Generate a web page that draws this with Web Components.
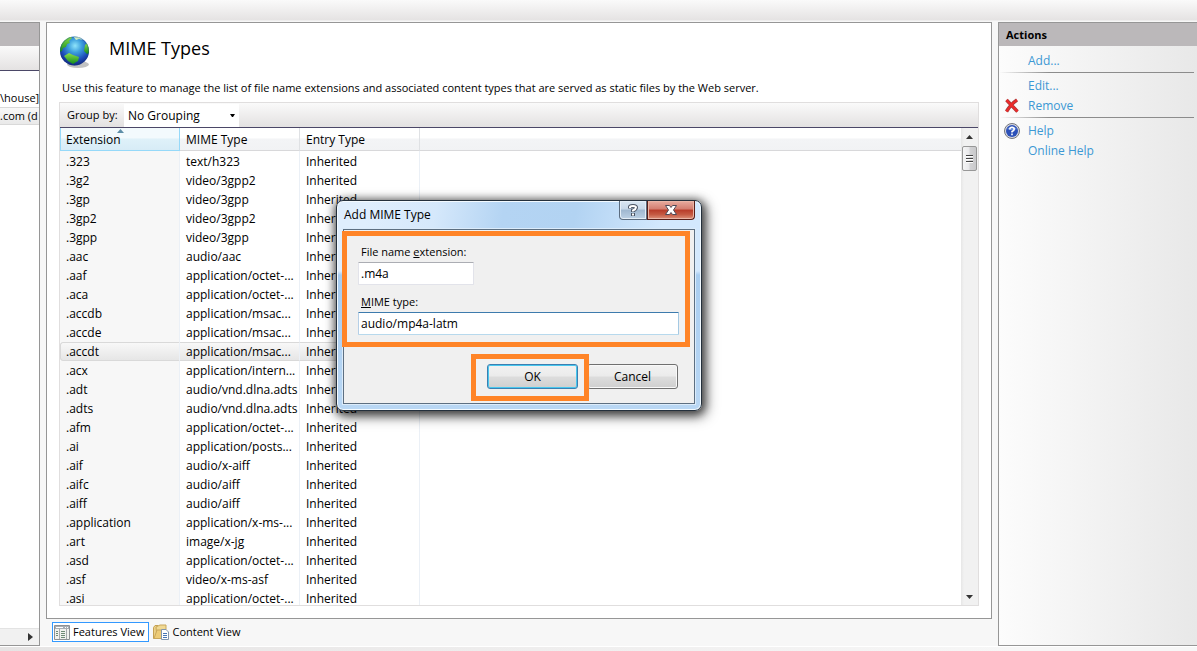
<!DOCTYPE html>
<html lang="en">
<head>
<meta charset="utf-8">
<title>MIME Types</title>
<style>
  html, body { height: 100%; margin: 0; }
  body { font: 12px/16px "Open Sans", "Noto Sans", sans-serif; color: #000; background: #f7f7f7; overflow: hidden; }
</style>
</head>
<body>
<manager-shell>
  <tree-pane slot="tree"></tree-pane>
  <feature-pane slot="feature"></feature-pane>
  <view-tabs slot="views"></view-tabs>
  <actions-pane slot="actions"></actions-pane>
</manager-shell>

<script>
const define = (name, html, setup) => {
  const template = document.createElement('template');
  template.innerHTML = '<style>*{box-sizing:border-box}</style>' + html;
  customElements.define(name, class extends HTMLElement {
    connectedCallback() {
      if (this.shadowRoot) return;
      const root = this.attachShadow({ mode: 'open' });
      root.append(template.content.cloneNode(true));
      if (setup) setup(root, this);
    }
  });
};

define('manager-shell', `
<style>
  :host { display: flex; flex-direction: column; height: 100vh; }
  .top { flex: none; height: 22px; background: linear-gradient(#fafafa, #e5e3e3 20px, #f7f7f7 21px); }
  .main { flex: 1; min-height: 0; display: flex; gap: 6px; }
  .tree { flex: none; display: flex; width: 40px; }
  .middle { flex: 1; min-width: 0; display: flex; flex-direction: column; gap: 3px; }
  slot[name=feature] { display: flex; flex: 1; min-height: 0; }
  .side { flex: none; display: flex; width: 199px; }
  .foot { flex: none; height: 5px; border-top: 1px solid #fff; background: linear-gradient(90deg, #e6e4e4, #f7f7f7 85%); }
</style>
<header class="top"></header>
<div class="main">
  <div class="tree"><slot name="tree"></slot></div>
  <div class="middle"><slot name="feature"></slot><slot name="views"></slot></div>
  <div class="side"><slot name="actions"></slot></div>
</div>
<footer class="foot"></footer>`);

define('tree-pane', `
<style>
  :host { flex: 1; min-width: 0; display: flex; flex-direction: column; overflow: hidden; box-sizing: border-box;
    border: solid #969696; border-width: 1px 1px 1px 0; background: #fff; white-space: nowrap; font-size: 11px; }
  .head { flex: none; height: 23px; background: #bbb8ba; }
  .tools { flex: none; height: 25px; background: linear-gradient(#fafafa, #e4e2e2); border-bottom: 1px solid #4b4767; }
  .nodes { flex: 1; padding-top: 18px; }
  .node { height: 18px; line-height: 18px; display: flex; }
  .on { height: 18px; line-height: 16px; background: linear-gradient(#f8f8f8, #e9e9e9); border: solid #d9d9d9; border-width: 1px 0; }
  .bar { flex: none; height: 17px; background: #f1f1f1; border-top: 1px solid #e3e3e3; display: flex; justify-content: flex-end; align-items: center; padding-right: 6px; }
</style>
<div class="head"></div><div class="tools"></div>
<div class="nodes"><div class="node">\\house]</div><div class="node on">.com (d</div></div>
<div class="bar"><svg width="5" height="8"><path d="M0 0L5 4L0 8Z" fill="#333"/></svg></div>`);

define('globe-icon', `
<style>:host { display: block; width: 32px; height: 34px; } svg { display: block; }</style>
<svg width="32" height="34" viewBox="0 0 32 34">
  <defs>
    <radialGradient id="sea" cx=".52" cy=".32" r=".66"><stop offset="0" stop-color="#8fe4fa"/><stop offset=".35" stop-color="#3c9fdd"/><stop offset=".75" stop-color="#1d4bb8"/><stop offset="1" stop-color="#122a7e"/></radialGradient>
    <linearGradient id="land" x1="0" y1="0" x2="0" y2="1"><stop offset="0" stop-color="#8be04c"/><stop offset="1" stop-color="#128a1c"/></linearGradient>
    <clipPath id="disc"><circle cx="15.500" cy="16" r="14.500"/></clipPath>
  </defs>
  <ellipse cx="19" cy="29.500" rx="11" ry="3.500" fill="#777" opacity=".45"/>
  <circle cx="15.500" cy="16" r="14.500" fill="url(#sea)"/>
  <g clip-path="url(#disc)" fill="url(#land)">
    <path d="M0 14C1 7 6 1 12 1L13 3L10 6L11 8L8 9L7 12L4 13L3 16L1 17Z"/>
    <path d="M14 1L21 2L24 5L20 4L17 5Z" fill="#d3f0c4"/>
    <path d="M26 10L28 8L31 12L31 18L28 19L25 16Z"/>
    <path d="M5 21L10 18L14 20L20 22L19 26L14 29L9 26Z"/>
  </g>
  <circle cx="15.500" cy="16" r="14" fill="none" stroke="#1c3d91" stroke-opacity=".3"/>
</svg>`);

define('feature-pane', `
<style>
  :host { position: relative; flex: 1; min-width: 0; display: flex; flex-direction: column; box-sizing: border-box; border: 1px solid #969696; background: #fff; padding: 12px; }
  header { display: flex; align-items: flex-start; gap: 18px; height: 44px; }
  h1 { margin: 0; font-size: 18px; line-height: 26px; font-weight: 400; }
  p { margin: 0 3px; font-size: 11px; line-height: 18px; height: 23px; white-space: nowrap; }
  .list { flex: 1; min-height: 0; display: flex; flex-direction: column; border: 1px solid #e0dede; }
  .group { flex: none; height: 25px; display: flex; align-items: center; background: linear-gradient(#fafafa, #e3e1e1); border-bottom: 1px solid #4b4767; padding-left: 7px; }
  label { width: 57px; white-space: nowrap; font-size: 11px; }
  .pick { position: relative; display: flex; align-self: stretch; width: 115px; padding-top: 1px; }
  select { appearance: none; width: 100%; border: 0; margin: 0; padding: 0 4px; background: #fff; font: inherit; color: inherit; border-radius: 0; }
  .pick svg { position: absolute; right: 4px; top: 11px; }
  .body { flex: 1; min-height: 0; display: flex; }
  add-mime-dialog { position: absolute; top: 177px; left: calc(50% - 183px); }
</style>
<header><globe-icon></globe-icon><h1>MIME Types</h1></header>
<p>Use this feature to manage the list of file name extensions and associated content types that are served as static files by the Web server.</p>
<section class="list">
  <div class="group"><label for="grouping">Group by:</label>
    <div class="pick"><select id="grouping"><option>No Grouping</option></select><svg width="5" height="3"><path d="M0 0H5L3 3H2Z"/></svg></div></div>
  <div class="body"><mime-table></mime-table><list-scrollbar></list-scrollbar></div>
</section>
<add-mime-dialog></add-mime-dialog>`);

const types = [
  ['.323', 'text/h323'], ['.3g2', 'video/3gpp2'], ['.3gp', 'video/3gpp'], ['.3gp2', 'video/3gpp2'], ['.3gpp', 'video/3gpp'],
  ['.aac', 'audio/aac'], ['.aaf', 'application/octet-...'], ['.aca', 'application/octet-...'], ['.accdb', 'application/msac...'],
  ['.accde', 'application/msac...'], ['.accdt', 'application/msac...'], ['.acx', 'application/intern...'], ['.adt', 'audio/vnd.dlna.adts'],
  ['.adts', 'audio/vnd.dlna.adts'], ['.afm', 'application/octet-...'], ['.ai', 'application/posts...'], ['.aif', 'audio/x-aiff'],
  ['.aifc', 'audio/aiff'], ['.aiff', 'audio/aiff'], ['.application', 'application/x-ms-...'], ['.art', 'image/x-jg'],
  ['.asd', 'application/octet-...'], ['.asf', 'video/x-ms-asf'], ['.asi', 'application/octet-...']
];

define('mime-table', `
<style>
  :host { flex: 1; min-width: 0; display: block; overflow: hidden; }
  table { width: 100%; table-layout: fixed; border-collapse: separate; border-spacing: 0; }
  col.data { width: 120px; }
  th, td { padding: 0 0 0 6px; text-align: left; white-space: nowrap; overflow: hidden; font-weight: 400; }
  th { height: 23px; padding-top: 2px; background: linear-gradient(#fff 45%, #f3f4f6 50%, #f1f2f4); border: solid #d8d8da; border-width: 0 0 1px; }
  th:nth-child(-n+3) { border-right: 1px solid #dfe1e4; }
  th.sorted { position: relative; padding-left: 5px; background: linear-gradient(#f3fafd 45%, #dff1f9 50%, #d7ecf6); border: solid #96d9f9; border-width: 0 1px 1px; }
  th svg { position: absolute; left: 56px; top: 1px; }
  td { height: 19px; line-height: 18px; }
  td:nth-child(-n+3) { border-right: 1px solid #ebf0f6; }
  td:first-child { background: #f7f7f7; }
  tbody tr:first-child td { height: 20px; padding-top: 1px; }
  tr.chosen td:nth-child(-n+3) { background: linear-gradient(#f8f8f8, #e6e6e6); border-top: 1px solid #d9d9d9; border-bottom: 1px solid #d9d9d9; line-height: 16px; }
  tr.chosen td:first-child { border-left: 1px solid #d9d9d9; border-radius: 3px 0 0 3px; padding-left: 5px; }
</style>
<table>
  <colgroup><col class="data"><col class="data"><col class="data"><col></colgroup>
  <thead><tr><th class="sorted">Extension<svg width="7" height="4"><path d="M0 4L3.500 0L7 4Z" fill="#5e8ea8"/></svg></th><th>MIME Type</th><th>Entry Type</th><th></th></tr></thead>
  <tbody></tbody>
</table>`, root => {
  const body = root.querySelector('tbody');
  for (const [ext, type] of types) {
    const row = body.insertRow();
    if (ext === '.accdt') row.className = 'chosen';
    for (const text of [ext, type, 'Inherited', '']) row.insertCell().textContent = text;
  }
});

define('list-scrollbar', `
<style>
  :host { flex: none; display: flex; flex-direction: column; align-items: center; width: 17px; box-sizing: border-box; background: linear-gradient(90deg, #e6e6e6, #f1f1f1 3px, #f1f1f1); padding: 7px 1px 6px; }
  .thumb { width: 15px; height: 25px; margin-top: 7px; border: 1px solid #979797; border-radius: 2px; background: linear-gradient(90deg, #f5f5f5, #e9e9eb 45%, #d2d2d4 55%, #c9c9cb); display: flex; flex-direction: column; gap: 1px; align-items: center; justify-content: center; }
  .thumb i { width: 7px; height: 2px; background: #444; border-bottom: 1px solid #fff; }
  .space { flex: 1; }
</style>
<svg width="7" height="4"><path d="M0 4L3.500 0L7 4Z" fill="#333"/></svg>
<div class="thumb"><i></i><i></i><i></i></div><div class="space"></div>
<svg width="7" height="4"><path d="M0 0H7L3.500 4Z" fill="#333"/></svg>`);

define('caption-button', `
<style>
  :host { display: block; width: 28px; }
  :host([kind=close]) { width: 48px; }
  button { display: block; width: 100%; height: 19px; padding: 0; border: 1px solid #5b6c7f; border-top: 0; border-radius: 0 0 0 4px; background: linear-gradient(#d9e6f2, #c6d7e8 45%, #9fb7cf 50%, #bdd1e5); box-shadow: inset 0 0 0 1px #e4eef7; }
  svg { display: block; margin: auto; }
  :host([kind=close]) button { border-color: #571e18; border-radius: 0 0 4px 0; background: linear-gradient(#e8aca0, #d37d6f 45%, #b83b29 50%, #c55a43 75%, #dd917b); box-shadow: inset 0 0 0 1px #eab5a6; }
  .x { display: none; }
  :host([kind=close]) .x { display: block; }
  :host([kind=close]) .q { display: none; }
</style>
<button type="button">
  <svg class="q" width="12" height="14" viewBox="0 0 12 14" fill="none"><path d="M3 5.500V4Q3 3 6 3T9 4.500Q9 6 6 7.500V9M6 10V13" stroke="#4a5464" stroke-width="4"/><path d="M3 5V4Q3 3 6 3T9 4.500Q9 6 6 7.500V8.500M6 10.500V12.500" stroke="#fff" stroke-width="2"/></svg>
  <svg class="x" width="14" height="12" viewBox="0 0 14 12"><path d="M1.500 1.500H5.500L7 3.500L8.500 1.500H12.500L9.500 6L12.500 10.500H8.500L7 8.500L5.500 10.500H1.500L4.500 6Z" fill="#fff" stroke="#4f4a57"/></svg>
</button>`, (root, host) => root.querySelector('button').setAttribute('aria-label', host.getAttribute('label')));

define('push-button', `
<style>
  :host { display: block; width: 91px; }
  button { display: block; width: 100%; height: 25px; padding: 0; border: 1px solid #707070; border-radius: 3px; font: inherit; color: #000; background: linear-gradient(#f2f2f2, #ebebeb 48%, #dddddd 52%, #cfcfcf); box-shadow: inset 0 0 0 1px #f9f9f9; }
  :host([primary]) button { border-color: #3c7fb1; box-shadow: inset 0 0 0 1px #48c7ee; }
</style>
<button type="button"><slot></slot></button>`);

define('add-mime-dialog', `
<style>
  :host { display: block; width: 366px; height: 211px; box-sizing: border-box; padding: 0 6px 6px; border: 1px solid #24303c; border-radius: 7px;
    background: linear-gradient(#d9ebfd00 70px, #a9cdf0 74px, #b9d7f4), linear-gradient(100deg, #dfeefd 8%, #d5e8fb 25%, #b4d4f3 42%, #b2d3f2 60%, #d3e8fd 82%);
    box-shadow: inset 0 0 0 1px #f3faff, 1px 2px 8px 2px #00000099, 3px 4px 14px 2px #00000066; }
  .title { display: flex; align-items: flex-start; height: 28px; }
  h2 { flex: 1; margin: 0 0 0 1px; font-size: 12px; line-height: 28px; font-weight: 400; }
  form { position: relative; height: 175px; margin: 0; padding: 13px 15px 14px 14px; border: 1px solid #5d6f81; background: #f0f0f0; display: flex; flex-direction: column; align-items: flex-start; box-shadow: 0 0 0 1px #dcecfb; }
  label { margin-left: 3px; height: 19px; font-size: 11px; line-height: 18px; }
  input { height: 23px; width: 116px; padding: 0 2px; border: 1px solid #e2e3ea; border-top-color: #abadb3; border-radius: 1px; background: #fff; font: inherit; color: inherit; outline: 0; }
  input.type { width: 100%; border-color: #3d7bad #a4c9e3 #b7d9ed #b5cfe7; }
  .gap { height: 8px; }
  .keys { display: flex; gap: 9px; align-self: flex-end; margin-top: auto; padding-right: 1px; }
  .mark { position: absolute; border: 5px solid #ff8427; pointer-events: none; }
  .fields { left: -2px; right: 4px; top: 1px; height: 116px; }
  .confirm { right: 105px; bottom: 2px; width: 118px; height: 47px; }
</style>
<div class="title"><h2>Add MIME Type</h2><caption-button label="Help"></caption-button><caption-button kind="close" label="Close"></caption-button></div>
<form>
  <label for="ext">File name <u>e</u>xtension:</label><input id="ext" value=".m4a">
  <div class="gap"></div>
  <label for="type"><u>M</u>IME type:</label><input id="type" class="type" value="audio/mp4a-latm">
  <div class="keys"><push-button primary>OK</push-button><push-button>Cancel</push-button></div>
  <div class="mark fields"></div><div class="mark confirm"></div>
</form>`);

define('view-tabs', `
<style>
  :host { flex: none; display: flex; box-sizing: border-box; height: 24px; padding: 0 6px 4px; gap: 2px; }
  button { display: flex; align-items: center; gap: 3px; height: 20px; padding: 0 4px 0 1px; border: 1px solid transparent; background: none; font: inherit; font-size: 11px; color: #000; white-space: nowrap; }
  button.on { border-color: #3399ff; background: #fff; }
  svg { flex: none; }
</style>
<button class="on" type="button"><svg width="16" height="16"><path d="M.5 1.500H15.500V15.500H.5Z" fill="#f1f1ee" stroke="#8d9094"/><path d="M1 2H15V5H1Z" fill="#a9adb2"/><path d="M2 3.500H9M11 3.500H12M13 3.500H14" stroke="#fff"/><path d="M5.500 5V15M12.500 5V15" stroke="#a8aaad"/><path d="M2 7.500H4M2 9.500H4M2 11.500H4M7 7.500H11M7 9.500H11M7 11.500H11M7 13.500H11" stroke="#6f8a76"/></svg>Features View</button>
<button type="button"><svg width="16" height="16"><path d="M.5 3.500L2 1.500H5L6 3V14.500H.5Z" fill="#ecd187" stroke="#c4a052"/><path d="M3 3L7 1H13V10L4 14Z" fill="#f0d994" stroke="#c9a75a"/><path d="M1 14.500L4 6H12V14.500Z" fill="#edcb76" stroke="#c9a75a"/><path d="M8.500 5.500H13L15.500 8V15.500H8.500Z" fill="#fff" stroke="#8296ad"/><path d="M10 9.500H14M10 11.500H14M10 13.500H14" stroke="#4776b5"/></svg>Content View</button>`);

define('action-link', `
<style>
  :host { display: flex; align-items: center; height: 20px; padding-left: 5px; }
  .icon { width: 16px; height: 16px; margin-right: 8px; display: flex; }
  a { color: #3c98d4; text-decoration: none; }
</style>
<span class="icon"><slot name="icon"></slot></span><a href="#"><slot></slot></a>`);

define('actions-pane', `
<style>
  :host { flex: 1; min-width: 0; box-sizing: border-box; border: solid #969696; border-width: 1px 0 1px 1px; background: linear-gradient(90deg, #fcfcfc, #e8e8e8); }
  h2 { margin: 0; height: 23px; padding-left: 7px; background: #bbb8ba; font-size: 11px; line-height: 23px; font-weight: 700; }
  nav { padding: 5px 3px 0 0; }
  hr { height: 1px; margin: 1px 0 3px; border: 0; background: linear-gradient(90deg, #8c8c8c00, #8c8c8c 50px); }
</style>
<h2>Actions</h2>
<nav>
  <action-link>Add...</action-link>
  <hr>
  <action-link>Edit...</action-link>
  <action-link><svg slot="icon" width="16" height="16"><path d="M2.500 2L13.500 13.500M13 2Q7 6 2.500 13.500" stroke="#a93a3a" stroke-width="3.500" fill="none"/><path d="M2.500 2L13.500 13.500M13 2Q7 6 2.500 13.500" stroke="#ee2a2a" stroke-width="2" fill="none"/></svg>Remove</action-link>
  <hr>
  <action-link><svg slot="icon" width="16" height="16"><circle cx="8" cy="8" r="7.500" fill="#d9dbe2" stroke="#73757d"/><circle cx="8" cy="8" r="6" fill="#2b50b8"/><path d="M3 6Q8 1 13 6Q8 8 3 6Z" fill="#6f93e0"/><path d="M5.800 6.500Q5.800 4.300 8 4.300T10.200 6.200Q10.200 7.500 8 8.500V9.500M8 10.500V12.300" stroke="#fff" stroke-width="1.600" fill="none"/></svg>Help</action-link>
  <action-link>Online Help</action-link>
</nav>`);
</script>
</body>
</html>
